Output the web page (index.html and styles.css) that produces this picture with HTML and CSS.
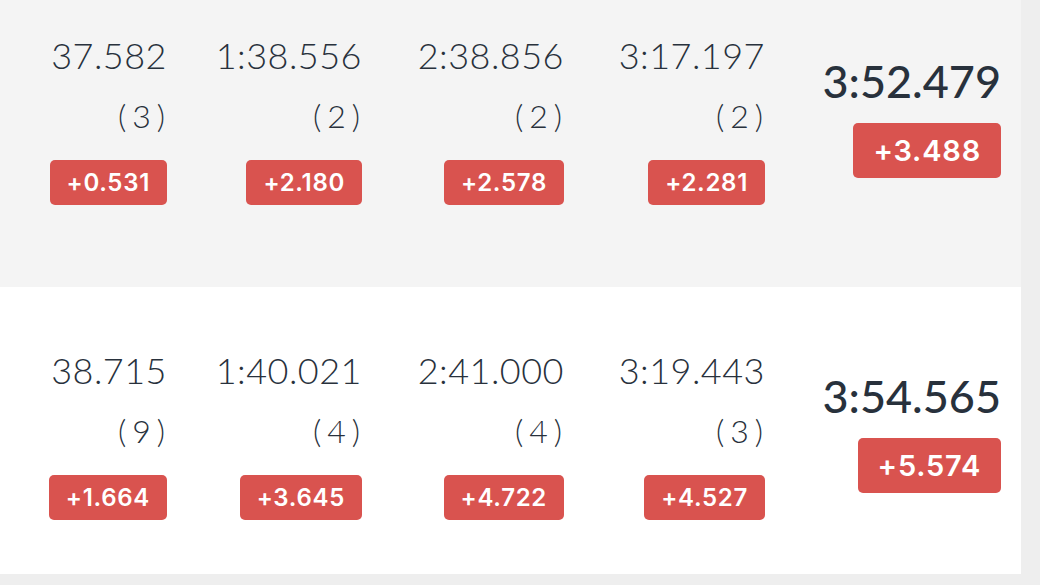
FILE: index.html
```html
<!DOCTYPE html>
<html lang="en">
<head>
<meta charset="utf-8">
<title>Sector times</title>
<link rel="stylesheet" href="styles.css">
</head>
<body>
<div class="board">
  <div class="row row-first">
    <div class="cell"><div class="time">37.582</div><div class="pos">(3)</div><span class="gap">+0.531</span></div>
    <div class="cell"><div class="time">1:38.556</div><div class="pos">(2)</div><span class="gap">+2.180</span></div>
    <div class="cell"><div class="time">2:38.856</div><div class="pos">(2)</div><span class="gap">+2.578</span></div>
    <div class="cell"><div class="time">3:17.197</div><div class="pos">(2)</div><span class="gap">+2.281</span></div>
    <div class="cell total"><div class="total-time">3:52.479</div><span class="gap gap-lg">+3.488</span></div>
  </div>
  <div class="row row-second">
    <div class="cell"><div class="time">38.715</div><div class="pos">(9)</div><span class="gap">+1.664</span></div>
    <div class="cell"><div class="time">1:40.021</div><div class="pos">(4)</div><span class="gap">+3.645</span></div>
    <div class="cell"><div class="time">2:41.000</div><div class="pos">(4)</div><span class="gap">+4.722</span></div>
    <div class="cell"><div class="time">3:19.443</div><div class="pos">(3)</div><span class="gap">+4.527</span></div>
    <div class="cell total"><div class="total-time">3:54.565</div><span class="gap gap-lg">+5.574</span></div>
  </div>
</div>
</body>
</html>
```
FILE: styles.css
```css
* { box-sizing: border-box; }
html, body { margin: 0; padding: 0; }
body {
  background: #eeeeee;
  font-family: "Lato", "Open Sans", sans-serif;
  color: #28313c;
  width: 1040px;
  height: 585px;
  overflow: hidden;
}
.board {
  width: 1021px;
}
.row {
  display: grid;
  grid-template-columns: 167px 195px 202px 201px 236px;
  align-items: center;
  height: 287px;
}
.row-first {
  background: #f4f4f4;
  padding-bottom: 48px;
}
.row-second {
  background: #ffffff;
  padding-top: 8px;
}
.cell {
  display: flex;
  flex-direction: column;
  align-items: flex-end;
}
.total {
  margin-bottom: 4px;
}
.time {
  font-size: 36px;
  font-weight: 300;
  line-height: 40px;
  letter-spacing: 0.5px;
}
.pos {
  font-size: 32px;
  font-weight: 300;
  line-height: 38px;
  margin-top: 22px;
  letter-spacing: 6px;
  margin-right: -4px;
}
.gap {
  display: inline-block;
  background: #d9534f;
  color: #ffffff;
  font-family: "Inter", "Lato", sans-serif;
  font-weight: 600;
  font-size: 24px;
  line-height: 45px;
  height: 45px;
  padding: 0 17px;
  border-radius: 5px;
  margin-top: 25px;
  letter-spacing: 0.7px;
}
.total-time {
  font-size: 45px;
  font-weight: 500;
  line-height: 48px;
}
.gap-lg {
  font-size: 29px;
  height: 55px;
  line-height: 55px;
  padding: 0 20px;
  margin-top: 18px;
  letter-spacing: 0.8px;
}
```
